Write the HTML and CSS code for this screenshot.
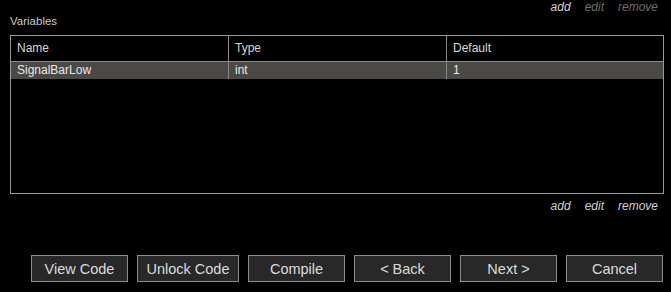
FILE: index.html
```html
<!DOCTYPE html>
<html>
<head>
<meta charset="utf-8">
<title>Variables</title>
<link rel="stylesheet" href="styles.css">
</head>
<body>
<div class="page">
  <div class="links top">
    <span class="link">add</span>
    <span class="link disabled">edit</span>
    <span class="link disabled">remove</span>
  </div>

  <div class="label">Variables</div>

  <div class="grid">
    <div class="row head">
      <div class="cell">Name</div>
      <div class="cell">Type</div>
      <div class="cell">Default</div>
    </div>
    <div class="row selected">
      <div class="cell">SignalBarLow</div>
      <div class="cell">int</div>
      <div class="cell">1</div>
    </div>
  </div>

  <div class="links bottom">
    <span class="link">add</span>
    <span class="link">edit</span>
    <span class="link">remove</span>
  </div>

  <div class="buttons">
    <button class="btn">View Code</button>
    <button class="btn wide">Unlock Code</button>
    <button class="btn">Compile</button>
    <button class="btn">&lt; Back</button>
    <button class="btn">Next &gt;</button>
    <button class="btn">Cancel</button>
  </div>
</div>
</body>
</html>
```

FILE: styles.css
```css
html, body {
   margin: 0;
   background-color: #000;
}

body {
   font-family: "Liberation Sans", Arial, sans-serif;
   color: #d8d8d8;
   font-size: 12px;
}

.page {
   width: 654px;
   padding-left: 10px;
}

.links {
   display: flex;
   justify-content: flex-end;
   gap: 14px;
   padding-right: 6px;
   height: 14px;
   line-height: 14px;
}

.link {
   font-style: italic;
   color: #d0d0d0;
}

.link.disabled {
   color: #6e6e6e;
}

.bottom {
   margin-top: 5px;
}

.label {
   font-size: 11.5px;
   line-height: 14px;
   color: #c8c8c8;
   margin-bottom: 7px;
}

.grid {
   box-sizing: border-box;
   height: 159px;
   border: 1px solid #9a9a9a;
}

.row {
   display: grid;
   grid-template-columns: 217px 218px 1fr;
}

.cell {
   padding-left: 6px;
   white-space: nowrap;
}

.cell + .cell {
   border-left: 1px solid #8a8a8a;
}

.head {
   height: 26px;
   line-height: 25px;
   box-sizing: border-box;
   border-bottom: 1px solid #8a8a8a;
}

.selected {
   height: 17px;
   line-height: 17px;
   background-color: #4a4946;
   color: #e8e8e8;
}

.buttons {
   display: flex;
   gap: 9px;
   margin-top: 42px;
   padding-left: 21px;
}

.btn {
   box-sizing: border-box;
   width: 97px;
   height: 27px;
   padding: 0;
   background-color: #282828;
   border: 1px solid #8c8c8c;
   color: #dcdcdc;
   font-family: "Liberation Sans", Arial, sans-serif;
   font-size: 14.5px;
}

.btn.wide {
   width: 102px;
}
```
